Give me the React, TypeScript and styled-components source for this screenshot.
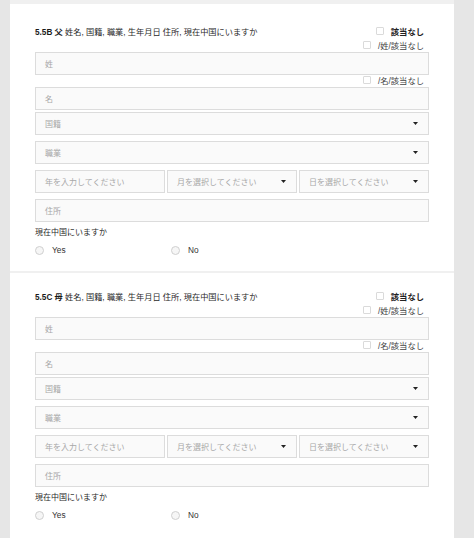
import React from 'react';
import styled, {createGlobalStyle} from 'styled-components';

const GlobalStyle = createGlobalStyle`
  html, body {
    margin: 0;
    padding: 0;
    background: #e6e6e6;
  }
  body {
    font-family: "Liberation Sans", "Noto Sans CJK JP", sans-serif;
    color: #333;
  }
`

type Person = {
    code: string;
    who: string;
}

const people: Person[] = [
    {code: '5.5B', who: '父'},
    {code: '5.5C', who: '母'},
];

const Arrow = () => (
    <svg width="5" height="3" viewBox="0 0 5 3">
        <path d="M0 0 L5 0 L2.5 3 Z" fill="#222"/>
    </svg>
);

const Section = ({person, first}: { person: Person; first?: boolean }) => {
    return (
        <StyledSection $first={first}>
            <Header>
                <Title>
                    <b>{person.code} {person.who}</b> 姓名, 国籍, 職業, 生年月日 住所, 現在中国にいますか
                </Title>
                <CheckOption $bold>
                    <Box/>該当なし
                </CheckOption>
            </Header>
            <SubCheckRow $top={4}>
                <CheckOption><Box/>/姓/該当なし</CheckOption>
            </SubCheckRow>
            <Field $top={2}>姓</Field>
            <SubCheckRow $top={0}>
                <CheckOption><Box/>/名/該当なし</CheckOption>
            </SubCheckRow>
            <Field $top={2}>名</Field>
            <Select $top={2}>国籍<Arrow/></Select>
            <Select $top={6}>職業<Arrow/></Select>
            <DateRow>
                <Field>年を入力してください</Field>
                <Select>月を選択してください<Arrow/></Select>
                <Select>日を選択してください<Arrow/></Select>
            </DateRow>
            <Field $top={6}>住所</Field>
            <Question>現在中国にいますか</Question>
            <RadioRow>
                <RadioOption><Circle/>Yes</RadioOption>
                <RadioOption><Circle/>No</RadioOption>
            </RadioRow>
        </StyledSection>
    );
};

export default function App() {
    return (
        <Page>
            <GlobalStyle/>
            <Panel>
                {people.map((p, i) => (
                    <Section key={p.code} person={p} first={i === 0}/>
                ))}
            </Panel>
        </Page>
    );
}

const Page = styled.div`
  height: 538px;
  overflow: hidden;
  background: #e6e6e6;
  padding-left: 10px;
  box-sizing: border-box;
`

const Panel = styled.div`
  width: 444px;
  height: 100%;
  background: #fff;
`

const StyledSection = styled.section<{ $first?: boolean }>`
  display: flex;
  flex-direction: column;
  padding: ${p => p.$first ? '22px' : '18px'} 25px 15px;
  border-top: ${p => p.$first ? '4px' : '2px'} solid #f0f0f0;
  font-size: 8px;
`

const Header = styled.div`
  display: flex;
  align-items: center;
  justify-content: space-between;
  height: 10px;
  padding-right: 5px;
`

const Title = styled.div`
  font-size: 8.2px;
  color: #2a2a2a;
  white-space: nowrap;

  b {
    color: #1a1a1a;
  }
`

const SubCheckRow = styled.div<{ $top: number }>`
  display: flex;
  justify-content: flex-end;
  height: 10px;
  margin-top: ${p => p.$top}px;
  padding-right: 5px;
`

const CheckOption = styled.label<{ $bold?: boolean }>`
  display: flex;
  align-items: center;
  gap: 7px;
  font-size: 8.3px;
  font-weight: ${p => p.$bold ? 700 : 400};
  color: ${p => p.$bold ? '#222' : '#444'};
  white-space: nowrap;
`

const Box = styled.span`
  width: 8px;
  height: 8px;
  box-sizing: border-box;
  border: 1px solid #dadada;
  border-radius: 1px;
  background: #fff;
`

const Field = styled.div<{ $top?: number }>`
  display: flex;
  align-items: center;
  justify-content: space-between;
  height: 23px;
  margin-top: ${p => p.$top ?? 0}px;
  padding: 0 10px 0 9px;
  box-sizing: border-box;
  border: 1px solid #dcdcdc;
  background: #fafafa;
  color: #a8a8a8;
  font-size: 8px;
  white-space: nowrap;
`

const Select = styled(Field)`
  svg {
    flex-shrink: 0;
  }
`

const DateRow = styled.div`
  display: grid;
  grid-template-columns: 1fr 1fr 1fr;
  gap: 2px;
  margin-top: 6px;
`

const Question = styled.div`
  margin-top: 6px;
  height: 10px;
  line-height: 10px;
  font-size: 8px;
  color: #2a2a2a;
`

const RadioRow = styled.div`
  display: grid;
  grid-template-columns: 136px 1fr;
  margin-top: 6px;
  height: 12px;
`

const RadioOption = styled.label`
  display: flex;
  align-items: center;
  gap: 8px;
  font-size: 8.3px;
  color: #333;
`

const Circle = styled.span`
  width: 9px;
  height: 9px;
  box-sizing: border-box;
  border: 1px solid #d0d0d0;
  border-radius: 50%;
  background: #f6f6f6;
`
